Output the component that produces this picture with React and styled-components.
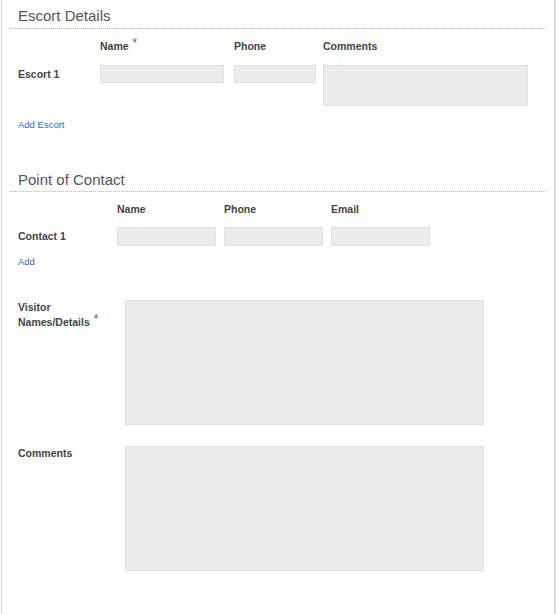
import styled, { createGlobalStyle } from "styled-components";

const GlobalStyle = createGlobalStyle`
  body {
    margin: 0;
    background: #ffffff;
    font-family: "Liberation Sans", Arial, sans-serif;
  }
`;

const App = () => {
  return (
    <>
      <GlobalStyle />
      <Page>
        <Section>
          <Heading $gap="4px">Escort Details</Heading>
          <FieldGrid $cols="82px 134px 89px 205px" $gap="0" $top="11px">
            <span />
            <ColHead>
              Name<Req>*</Req>
            </ColHead>
            <ColHead>Phone</ColHead>
            <ColHead>Comments</ColHead>
          </FieldGrid>
          <FieldGrid $cols="82px 134px 89px 205px" $gap="0" $top="12px">
            <RowLabel $h="18px">Escort 1</RowLabel>
            <Input $w="124px" $h="18px" />
            <Input $w="82px" $h="18px" />
            <Area $w="205px" $h="41px" />
          </FieldGrid>
          <AddLink $top="13px">Add Escort</AddLink>
        </Section>

        <Section $top="40px">
          <Heading $gap="3px">Point of Contact</Heading>
          <FieldGrid $cols="91px 99px 99px 99px" $gap="8px" $top="11px">
            <span />
            <ColHead>Name</ColHead>
            <ColHead>Phone</ColHead>
            <ColHead>Email</ColHead>
          </FieldGrid>
          <FieldGrid $cols="91px 99px 99px 99px" $gap="8px" $top="11px">
            <RowLabel $h="19px">Contact 1</RowLabel>
            <Input $w="99px" $h="19px" />
            <Input $w="99px" $h="19px" />
            <Input $w="99px" $h="19px" />
          </FieldGrid>
          <AddLink $top="10px">Add</AddLink>

          <BigRow $top="32px">
            <BlockLabel>
              Visitor
              <br />
              Names/Details<Req>*</Req>
            </BlockLabel>
            <Area $w="359px" $h="125px" />
          </BigRow>
          <BigRow $top="21px">
            <BlockLabel>Comments</BlockLabel>
            <Area $w="359px" $h="125px" />
          </BigRow>
        </Section>
      </Page>
    </>
  );
};

export default App;

const Page = styled.div`
  box-sizing: border-box;
  width: 555px;
  min-height: 100vh;
  margin-left: 1px;
  padding: 0 8px;
  border-left: 1px solid #d4d4d4;
  border-right: 2px solid #dcdcdc;
  overflow: hidden;
`;

const Section = styled.div`
  margin-top: ${(p) => p.$top || "7px"};
`;

const Heading = styled.div`
  font-size: 15px;
  line-height: 17px;
  color: #555555;
  padding: 0 0 ${(p) => p.$gap} 8px;
  border-bottom: 1px dotted #b9b9b9;
`;

const FieldGrid = styled.div`
  display: grid;
  grid-template-columns: ${(p) => p.$cols};
  column-gap: ${(p) => p.$gap};
  align-items: start;
  margin-top: ${(p) => p.$top};
  padding-left: 8px;
`;

const ColHead = styled.div`
  font-size: 10.5px;
  line-height: 13px;
  font-weight: bold;
  color: #444444;
  white-space: nowrap;
`;

const RowLabel = styled.div`
  font-size: 10.5px;
  line-height: ${(p) => p.$h};
  font-weight: bold;
  color: #444444;
  white-space: nowrap;
`;

const Req = styled.span`
  position: relative;
  top: -3px;
  margin-left: 4px;
  font-size: 12px;
  font-weight: normal;
  color: #c0392b;
`;

const Input = styled.input`
  box-sizing: border-box;
  width: ${(p) => p.$w};
  height: ${(p) => p.$h};
  margin: 0;
  padding: 0 4px;
  background: #ececec;
  border: 1px solid #e0e0e0;
  border-radius: 0;
  outline: none;
`;

const Area = styled.textarea`
  box-sizing: border-box;
  display: block;
  width: ${(p) => p.$w};
  height: ${(p) => p.$h};
  margin: 0;
  padding: 4px;
  background: #ececec;
  border: 1px solid #e0e0e0;
  border-radius: 0;
  resize: none;
  outline: none;
`;

const AddLink = styled.div`
  margin-top: ${(p) => p.$top};
  padding-left: 8px;
  font-size: 9.5px;
  line-height: 12px;
  color: #2a6db5;
  cursor: pointer;
`;

const BigRow = styled.div`
  display: grid;
  grid-template-columns: 107px 359px;
  align-items: start;
  margin-top: ${(p) => p.$top};
  padding-left: 8px;
`;

const BlockLabel = styled.div`
  font-size: 10.5px;
  line-height: 15px;
  font-weight: bold;
  color: #444444;
`;
